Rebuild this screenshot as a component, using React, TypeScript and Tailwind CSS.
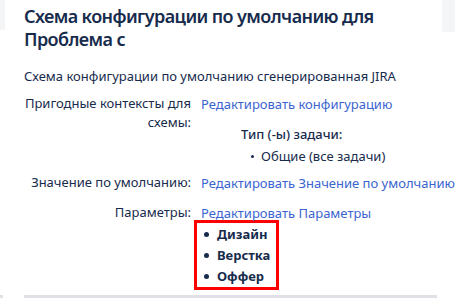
import React from 'react';

const font = { fontFamily: '"Noto Sans", "Open Sans", sans-serif' };

function Row({ label, children }: { label: React.ReactNode; children: React.ReactNode }) {
    return (
        <div className="flex gap-[10px]">
            <div className="w-[167px] shrink-0 text-right text-[13px] leading-[19px]">{label}</div>
            <div className="flex-1 text-[13px] leading-[20px]">{children}</div>
        </div>
    );
}

export default function App() {
    const params = ['Дизайн', 'Верстка', 'Оффер'];

    return (
        <div className="flex h-[298px] w-[455px] overflow-hidden bg-white text-[#172b4d]" style={font}>
            {/* обрезок левой панели */}
            <div className="flex w-[5px] shrink-0 flex-col">
                <div className="h-[30px] bg-[#f4f5f7]" />
                <div className="mt-auto h-[3px] w-[3px] bg-[#dfe1e6]" />
            </div>

            <div className="flex min-w-0 flex-1 flex-col">
                <div className="pl-[19px] pr-[10px]">
                    <h1 className="max-w-[400px] pt-[5px] text-[18px] font-semibold leading-[23px] tracking-[-0.6px]">
                        Схема конфигурации по умолчанию для Проблема с
                    </h1>

                    <p className="mt-[15px] text-[13px] leading-[20px]">
                        Схема конфигурации по умолчанию сгенерированная JIRA
                    </p>

                    <div className="mt-[8px] flex flex-col">
                        <Row label={<>Пригодные контексты для схемы:</>}>
                            <a className="text-[#3a64d0]">Редактировать конфигурацию</a>
                            <div className="mt-[10px] pl-[40px]">
                                <div className="font-medium">Тип (-ы) задачи:</div>
                                <ul className="mt-[2px] pl-[10px]">
                                    <li className="flex items-center gap-[7px]">
                                        <span className="h-[3px] w-[3px] rounded-full bg-[#172b4d]" />
                                        Общие (все задачи)
                                    </li>
                                </ul>
                            </div>
                        </Row>

                        <div className="mt-[7px]">
                            <Row label="Значение по умолчанию:">
                                <a className="whitespace-nowrap text-[#3a64d0]">Редактировать Значение по умолчанию</a>
                            </Row>
                        </div>

                        <div className="mt-[10px]">
                            <Row label="Параметры:">
                                <a className="text-[#3a64d0]">Редактировать Параметры</a>
                                <ul className="-ml-[7px] -mt-[3px] w-[85px] border-[3px] border-[#ff0000] pt-[1px]">
                                    {params.map((p) => (
                                        <li key={p} className="flex items-center gap-[8px] pl-[7px] text-[13px] font-bold leading-[21px]">
                                            <span className="h-[5px] w-[5px] rounded-full bg-[#172b4d]" />
                                            {p}
                                        </li>
                                    ))}
                                </ul>
                            </Row>
                        </div>
                    </div>
                </div>
                <div className="mt-auto ml-[19px] mr-[5px] h-[3px] shrink-0 bg-[#dfe1e6]" />
            </div>

            {/* обрезок правой панели */}
            <div className="w-[13px] shrink-0">
                <div className="h-[32px] rounded-bl-[3px] bg-[#f4f5f7]" />
            </div>
        </div>
    );
}
